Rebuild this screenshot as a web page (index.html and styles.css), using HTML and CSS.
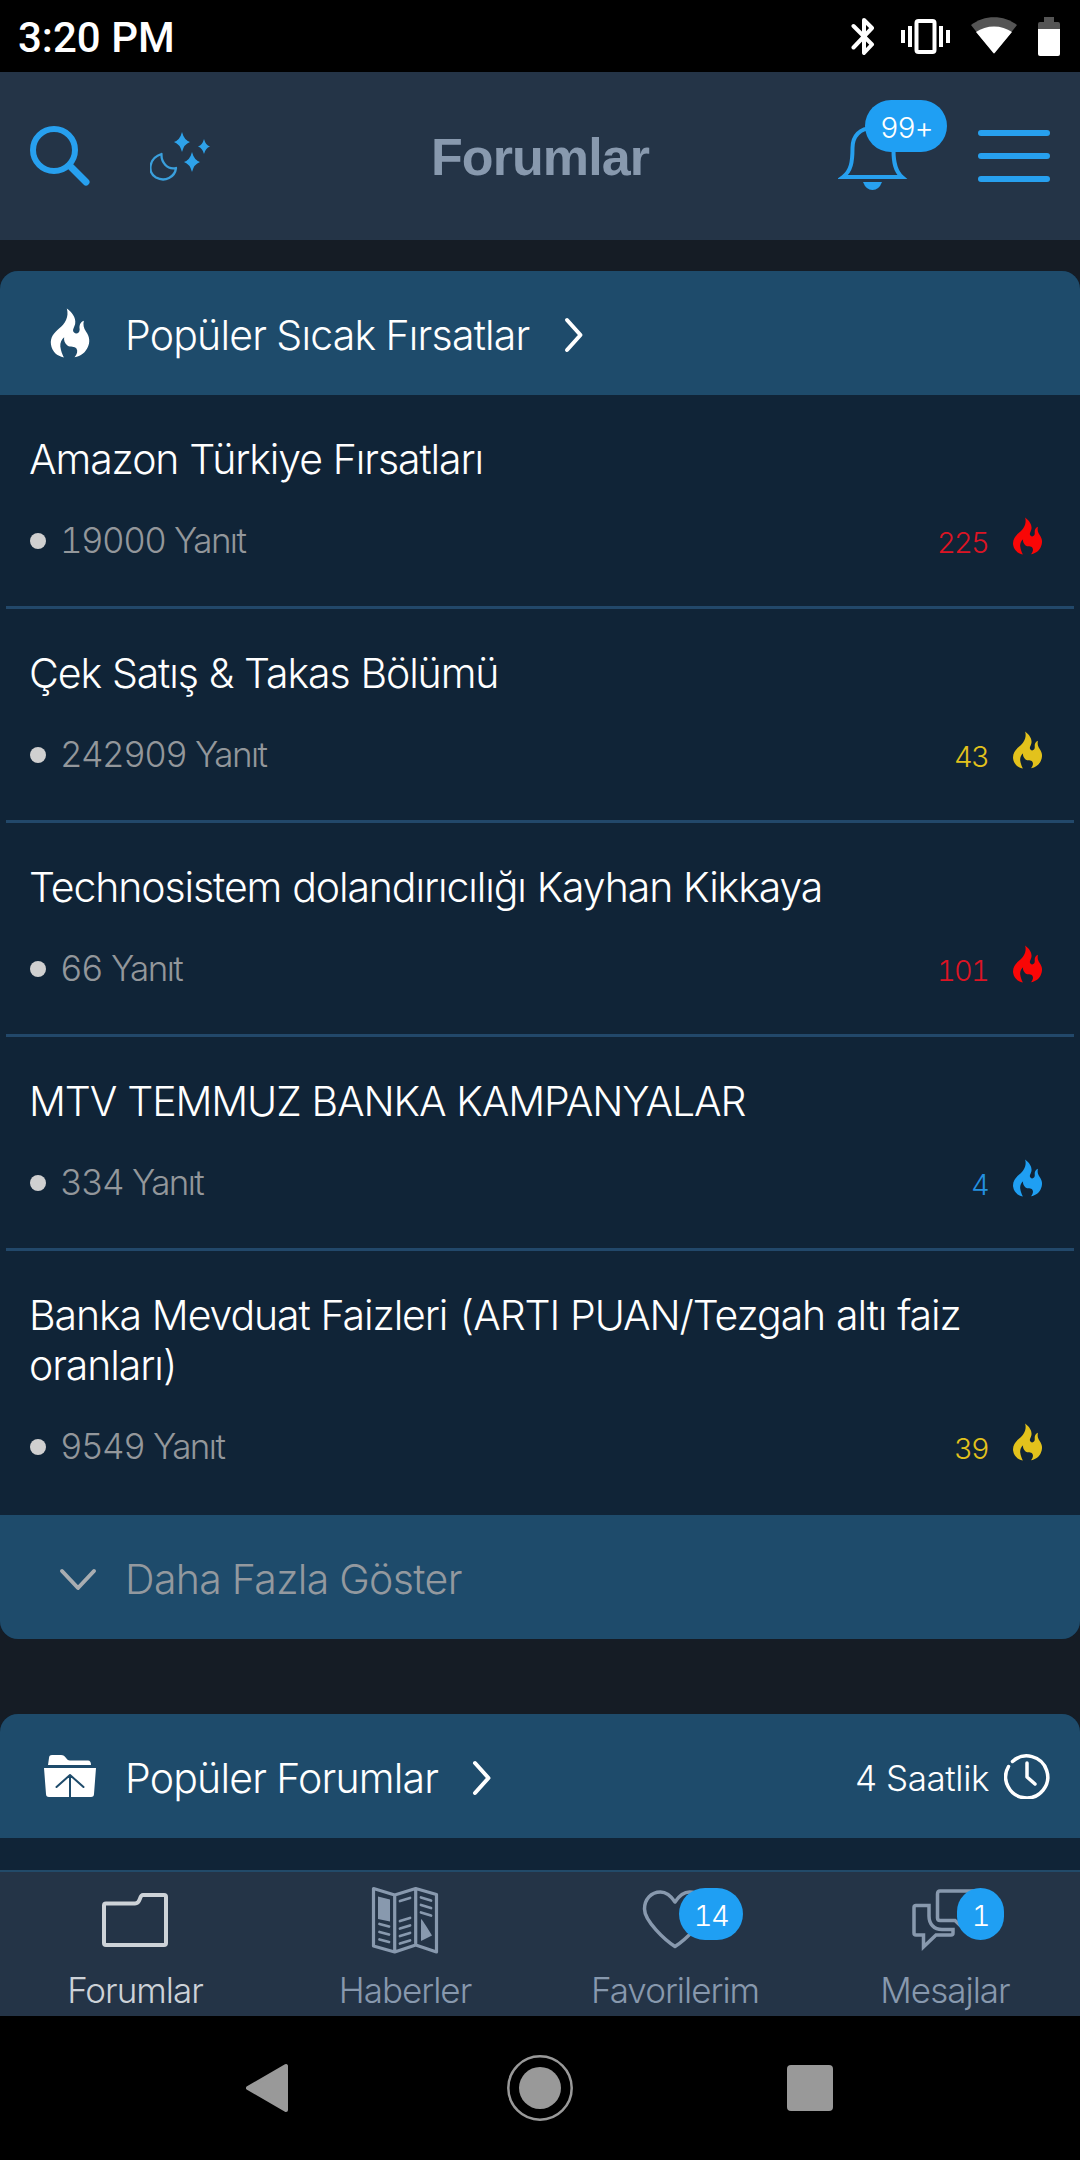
FILE: index.html
```html
<!DOCTYPE html>
<html lang="tr">
<head>
  <meta charset="UTF-8">
  <meta name="viewport" content="width=device-width, initial-scale=1.0">
  <title>Forumlar</title>
  <link rel="stylesheet" href="styles.css">
</head>
<body>

  <!-- shared icons -->
  <svg class="symbols">
    <symbol id="flame" viewBox="0 0 124 156">
      <path fill="currentColor" d="M52 2C66 12 82 30 78 50C75 62 68 68 74 76C80 83 92 80 92 66C90 54 94 44 105 40C102 52 104 62 112 74C124 90 124 108 117 122C110 138 96 150 76 153C84 144 87 134 82 126C76 118 64 124 54 117C46 110 42 100 44 91C36 97 31 108 32 120C34 134 38 144 43 154C22 150 6 136 3 114C0 92 12 78 28 64C46 50 60 28 52 2Z"/>
    </symbol>
    <symbol id="chevron" viewBox="0 0 20 36">
      <path fill="none" stroke="currentColor" stroke-width="4" stroke-linecap="round" stroke-linejoin="round" d="M3 3L16.500 18L3 33"/>
    </symbol>
  </svg>

  <div class="status-bar">
    <span class="clock">3:20 PM</span>
    <div class="status-icons">
      <svg class="bluetooth" width="24" height="38" viewBox="0 0 24 38">
        <path fill="none" stroke="#fff" stroke-width="4" stroke-linecap="round" stroke-linejoin="round" d="M2.500 9L21 27.500L13 36V3L21 11L2.500 30.500"/>
      </svg>
      <svg class="vibrate" width="49" height="38" viewBox="0 0 49 38">
        <rect x="15.500" y="4" width="18" height="31" rx="2" fill="none" stroke="#fff" stroke-width="4"/>
        <path fill="none" stroke="#fff" stroke-width="4" d="M2 13V26M9 9V30M40 9V30M47 13V26"/>
      </svg>
      <svg class="wifi" width="46" height="38" viewBox="0 0 46 38">
        <path fill="#555" d="M0 8C13-2.500 33-2.500 46 8L23 37Z"/>
        <path fill="#fff" d="M5 15C15 7.500 31 7.500 41 15L24 35.500Q23 37 22 35.500Z"/>
      </svg>
      <svg class="battery" width="22" height="39" viewBox="0 0 22 39">
        <path fill="#555" d="M6 0H16V5H20Q22 5 22 7V13H0V7Q0 5 2 5H6Z"/>
        <path fill="#fff" d="M0 12H22V37Q22 39 20 39H2Q0 39 0 37Z"/>
      </svg>
    </div>
  </div>

  <header class="header">
    <div class="header-left">
      <svg width="60" height="60" viewBox="0 0 60 60">
        <circle cx="24" cy="24" r="21" fill="none" stroke="#27a0ef" stroke-width="6"/>
        <path stroke="#27a0ef" stroke-width="7" stroke-linecap="round" d="M40 40L56 56"/>
      </svg>
      <svg width="60" height="60" viewBox="0 0 60 60">
        <path fill="none" stroke="#3a9fdc" stroke-width="2.300" stroke-linejoin="round" d="M11.500 28C-1 32-3 46 6 51.500C15 56.500 25 51 26 42C17 44 11 36 11.500 28Z"/>
        <path fill="#2ea2ea" d="M32 6Q34 14 40 16Q34 18 32 26Q30 18 24 16Q30 14 32 6ZM54 13Q55.500 19 60 20.500Q55.500 22 54 28Q52.500 22 48 20.500Q52.500 19 54 13ZM42 26Q44 34 50 36Q44 38 42 46Q40 38 34 36Q40 34 42 26Z"/>
      </svg>
    </div>
    <h1 class="header-title">Forumlar</h1>
    <div class="header-right">
      <div class="icon-wrap">
        <svg width="72" height="72" viewBox="0 0 72 72">
          <path fill="none" stroke="#27a0ef" stroke-width="4" d="M5 57H64C57 51 55.500 42 55.500 30C55.500 16 47 8 34.500 8C22 8 14.500 16 14.500 28C14.500 42 13 51 5 57Z"/>
          <path fill="#27a0ef" d="M25 62H44Q41 70 34.500 70Q28 70 25 62Z"/>
        </svg>
        <span class="badge badge-bell">99+</span>
      </div>
      <div class="menu"><i></i><i></i><i></i></div>
    </div>
  </header>

  <main class="content">
    <section class="card">
      <div class="card-header">
        <span class="card-icon"><svg width="40" height="52"><use href="#flame"/></svg></span>
        <h2>Popüler Sıcak Fırsatlar</h2>
        <svg class="arrow" width="20" height="36"><use href="#chevron"/></svg>
      </div>

      <div class="topic">
        <h3>Amazon Türkiye Fırsatları</h3>
        <div class="meta red">
          <span class="replies">19000 Yanıt</span>
          <span class="heat">225</span>
          <svg class="flame" width="31" height="38"><use href="#flame"/></svg>
        </div>
      </div>
      <div class="topic">
        <h3>Çek Satış &amp; Takas Bölümü</h3>
        <div class="meta yellow">
          <span class="replies">242909 Yanıt</span>
          <span class="heat">43</span>
          <svg class="flame" width="31" height="38"><use href="#flame"/></svg>
        </div>
      </div>
      <div class="topic">
        <h3>Technosistem dolandırıcılığı Kayhan Kikkaya</h3>
        <div class="meta red">
          <span class="replies">66 Yanıt</span>
          <span class="heat">101</span>
          <svg class="flame" width="31" height="38"><use href="#flame"/></svg>
        </div>
      </div>
      <div class="topic">
        <h3>MTV TEMMUZ BANKA KAMPANYALAR</h3>
        <div class="meta blue">
          <span class="replies">334 Yanıt</span>
          <span class="heat">4</span>
          <svg class="flame" width="31" height="38"><use href="#flame"/></svg>
        </div>
      </div>
      <div class="topic">
        <h3>Banka Mevduat Faizleri (ARTI PUAN/Tezgah altı faiz oranları)</h3>
        <div class="meta yellow">
          <span class="replies">9549 Yanıt</span>
          <span class="heat">39</span>
          <svg class="flame" width="31" height="38"><use href="#flame"/></svg>
        </div>
      </div>

      <div class="card-footer">
        <span class="card-icon">
          <svg width="38" height="24" viewBox="0 0 38 24">
            <path fill="none" stroke="#a9adb1" stroke-width="4" stroke-linecap="round" stroke-linejoin="round" d="M3 3L19 20L35 3"/>
          </svg>
        </span>
        <span>Daha Fazla Göster</span>
      </div>
    </section>

    <section class="card">
      <div class="card-header">
        <span class="card-icon">
          <svg width="52" height="44" viewBox="0 0 52 44">
            <path fill="#fff" d="M4 11L5 4Q5 1 8 1H17C22 1 22 6.500 26 6.500H44Q47 6.500 47 11ZM0 14H52L50 40Q50 43 47 43H5Q2 43 2 40Z"/>
            <path fill="none" stroke="#1e4b6b" stroke-width="2" stroke-linecap="round" stroke-linejoin="round" d="M26 43V21M12.500 33L26 21L39.500 33"/>
          </svg>
        </span>
        <h2>Popüler Forumlar</h2>
        <svg class="arrow" width="20" height="36"><use href="#chevron"/></svg>
        <div class="period">
          <span>4 Saatlik</span>
          <svg width="46" height="46" viewBox="0 0 46 46">
            <path fill="none" stroke="#fff" stroke-width="3.500" stroke-linecap="round" stroke-linejoin="round" d="M8.500 8.500A21 21 0 1 1 4.500 13.500M23 10V24L31 31"/>
          </svg>
        </div>
      </div>
    </section>
  </main>

  <nav class="tabs">
    <div class="tab active">
      <div class="icon-wrap">
        <svg width="72" height="72" viewBox="0 0 72 72">
          <path fill="none" stroke="currentColor" stroke-width="4" stroke-linejoin="round" d="M7 19.500H36C42 19.500 40 11 44 11H65Q67 11 67 13V59Q67 61 65 61H7Q5 61 5 59V21.500Q5 19.500 7 19.500Z"/>
        </svg>
      </div>
      <span>Forumlar</span>
    </div>
    <div class="tab">
      <div class="icon-wrap">
        <svg width="72" height="72" viewBox="0 0 72 72">
          <path fill="none" stroke="currentColor" stroke-width="3.200" stroke-linejoin="round" d="M4.500 4.500L25.700 11L46.700 4.500L67.500 10.500V68L46.700 61L25.700 68L4.500 62ZM25.700 11V68M46.700 4.500V61"/>
          <path fill="currentColor" d="M9 12.500L21 15.500V37.500L9 35ZM52 35Q53 35 63 51.500L52 57Z"/>
          <path fill="none" stroke="currentColor" stroke-width="2.800" stroke-linecap="round" d="M10.500 40L20 42.500M10.500 48L20 50.500M10.500 55.500L20 58M31 17L41 14M31 37L41 34M31 44.500L41 41.500M31 52L41 49M31 59.500L41 56.500M52 13.500L62 16.500M52 21L62 24M52 28.500L62 31.500"/>
        </svg>
      </div>
      <span>Haberler</span>
    </div>
    <div class="tab">
      <div class="icon-wrap">
        <svg width="72" height="72" viewBox="0 0 72 72">
          <path fill="none" stroke="currentColor" stroke-width="3.500" stroke-linejoin="round" d="M36 18C32 12 28 8 21.500 8C12 8 5.500 15.500 5.500 25C5.500 37 26 56 36 62.500C46 56 66.500 37 66.500 25C66.500 15.500 60 8 50.500 8C44 8 40 12 36 18Z"/>
        </svg>
        <span class="badge badge-fav">14</span>
      </div>
      <span>Favorilerim</span>
    </div>
    <div class="tab">
      <div class="icon-wrap">
        <svg width="72" height="72" viewBox="0 0 72 72">
          <path fill="none" stroke="currentColor" stroke-width="3.500" d="M7 21.500H20V32C20 40 25 45.500 33 45.500H44V49Q44 51 42 51H27L14.500 63V51H7Q5 51 5 49V23.500Q5 21.500 7 21.500ZM31 7H64Q67 7 67 10V34Q67 36.500 64 36.500H58V48L46 36.500H31Q28.500 36.500 28.500 34V10Q28.500 7 31 7Z"/>
        </svg>
        <span class="badge badge-msg">1</span>
      </div>
      <span>Mesajlar</span>
    </div>
  </nav>

  <div class="system-nav">
    <svg width="42" height="50" viewBox="0 0 42 50">
      <path fill="#999" stroke="#999" stroke-width="4" stroke-linejoin="round" d="M2 25L40 3V47Z"/>
    </svg>
    <svg class="home" width="68" height="68" viewBox="0 0 68 68">
      <circle cx="34" cy="34" r="31.700" fill="none" stroke="#999" stroke-width="2.500"/>
      <circle cx="34" cy="34" r="21" fill="#999"/>
    </svg>
    <div class="recents"></div>
  </div>

</body>
</html>
```
FILE: styles.css
```css
* {
  box-sizing: border-box;
}
body {
  margin: 0;
  width: 1080px;
  height: 2160px;
  display: flex;
  flex-direction: column;
  overflow: hidden;
  background-color: #151c25;
  color: #fff;
  font-family: Inter, "Liberation Sans", sans-serif;
  font-weight: 300;
  font-size: 41px;
  letter-spacing: -0.8px;
  font-variant-numeric: tabular-nums;
}
svg {
  display: block;
  flex: none;
}
h1, h2, h3 {
  margin: 0;
  font-size: inherit;
  font-weight: inherit;
}
.symbols {
  display: none;
}

/* status bar */
.status-bar {
  height: 72px;
  padding: 0 20px 0 18px;
  background-color: #000;
  display: flex;
  align-items: center;
  justify-content: space-between;
}
.clock {
  padding-top: 3px;
  font-family: Roboto, sans-serif;
  font-weight: 500;
  font-size: 42px;
  letter-spacing: 0;
}
.status-icons {
  display: flex;
  align-items: center;
}
.vibrate {
  margin-left: 26px;
}
.wifi {
  margin-left: 21px;
}
.battery {
  margin-left: 21px;
}

/* header */
.header {
  height: 168px;
  padding: 0 30px;
  background-color: #243447;
  display: grid;
  grid-template-columns: 1fr auto 1fr;
  align-items: center;
}
.header-left {
  display: flex;
  gap: 60px;
}
.header-title {
  padding-top: 2px;
  font-family: "Liberation Sans", Arial, sans-serif;
  font-weight: bold;
  font-size: 52px;
  letter-spacing: -0.9px;
  color: #8899ae;
}
.header-right {
  display: flex;
  align-items: center;
  justify-content: flex-end;
  gap: 68px;
}
.menu {
  width: 72px;
  display: flex;
  flex-direction: column;
  gap: 17px;
}
.menu i {
  height: 6px;
  border-radius: 3px;
  background-color: #27a0ef;
}

.icon-wrap {
  position: relative;
  width: 72px;
  height: 72px;
}
.badge {
  position: absolute;
  height: 52px;
  border-radius: 26px;
  padding-top: 3px;
  background-color: #1f9ff3;
  color: #fff;
  font-weight: 300;
  font-size: 29px;
  line-height: 49px;
  letter-spacing: -1.4px;
  text-align: center;
}
.badge-bell {
  left: 27px;
  top: -20px;
  width: 82px;
}
.badge-fav {
  left: 40px;
  top: 4px;
  width: 64px;
}
.badge-msg {
  left: 48px;
  top: 4px;
  width: 47px;
}

/* cards */
.content {
  height: 1630px;
  padding-top: 31px;
  overflow: hidden;
}
.card {
  border-radius: 18px;
  overflow: hidden;
  background-color: #102437;
}
.card + .card {
  margin-top: 75px;
  height: 300px;
}
.card-header, .card-footer {
  height: 124px;
  padding: 0 30px;
  background-color: #1e4b6b;
  display: flex;
  align-items: center;
}
.card-header h2, .card-footer > span:last-child {
  padding-top: 4px;
}
.card-icon {
  width: 80px;
  margin-right: 15px;
  display: flex;
  justify-content: center;
}
.arrow {
  margin-left: 34px;
  margin-top: 4px;
}
.card-footer {
  color: #93999f;
  letter-spacing: -0.6px;
}
.card-footer .card-icon {
  padding: 5px 0 0 16px;
}
.period {
  margin-left: auto;
  display: flex;
  align-items: center;
  gap: 15px;
  font-size: 35px;
  letter-spacing: -0.4px;
}
.period span {
  padding-top: 3px;
}

.topic {
  padding: 39px 30px 44px 29px;
  position: relative;
  border-bottom: 3px solid transparent;
}
.topic h3 {
  line-height: 50px;
  letter-spacing: -1.1px;
  word-spacing: 1px;
}
.topic:not(:nth-last-child(2))::after {
  content: "";
  position: absolute;
  left: 6px;
  right: 6px;
  bottom: -3px;
  height: 3px;
  background-color: #22486a;
}
.meta {
  height: 42px;
  margin-top: 36px;
  padding-right: 7px;
  display: flex;
  align-items: baseline;
  line-height: 40px;
}
.replies {
  flex: 1;
  color: #93979b;
  font-size: 35px;
  letter-spacing: -1.6px;
  word-spacing: 1px;
}
.replies::before {
  content: "";
  display: inline-block;
  width: 16px;
  height: 16px;
  margin: 0 14px 0 1px;
  border-radius: 50%;
  background-color: #d0d0d0;
  vertical-align: 4px;
}
.heat {
  font-size: 29px;
  letter-spacing: -1.8px;
}
.flame {
  margin-left: 24px;
  align-self: flex-start;
  margin-top: -3px;
}
.red .heat { color: #dc1424; }
.red .flame { color: #f90606; }
.yellow .heat { color: #e3c21c; }
.yellow .flame { color: #e3c21c; }
.blue .heat { color: #2491e0; }
.blue .flame { color: #1f9ff3; }

/* bottom tabs */
.tabs {
  height: 146px;
  border-top: 2px solid #224a69;
  background-color: #243447;
  display: grid;
  grid-template-columns: repeat(4, 1fr);
}
.tab {
  padding-top: 12px;
  display: flex;
  flex-direction: column;
  align-items: center;
  color: #8899ae;
}
.tab > span {
  margin-top: 13px;
  font-size: 35px;
  line-height: 42px;
  letter-spacing: -1px;
}
.tab.active {
  color: #cdd2d8;
}

.system-nav {
  height: 144px;
  padding: 0 247px 0 246px;
  background-color: #000;
  display: flex;
  align-items: center;
  justify-content: space-between;
}
.home {
  margin-left: 4px;
}
.recents {
  width: 46px;
  height: 46px;
  border-radius: 4px;
  background-color: #999;
}
```
